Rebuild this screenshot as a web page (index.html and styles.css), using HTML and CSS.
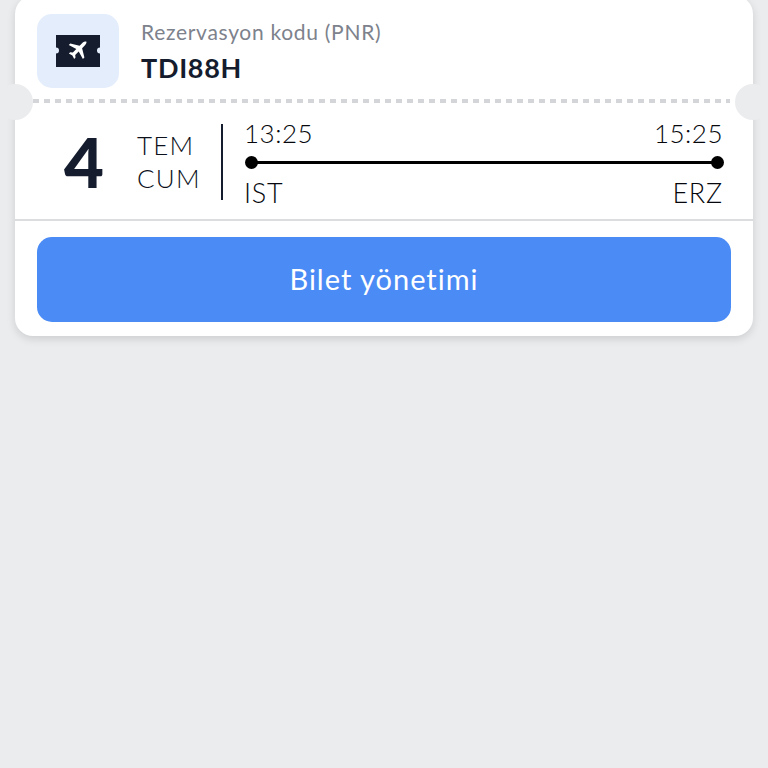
FILE: index.html
```html
<!DOCTYPE html>
<html lang="tr">
<head>
<meta charset="utf-8">
<title>Bilet</title>
<link rel="stylesheet" href="styles.css">
</head>
<body>
<main class="card">
  <section class="head">
    <div class="icon-box">
      <svg class="ticket" width="46" height="34" viewBox="0 0 46 34">
        <path fill="#141c2e" d="M1 1H45V13.500a3 3 0 0 0 0 6V33H1V19.500a3 3 0 0 0 0-6Z"/>
        <path fill="#fff" d="M31.500 7.800c-1-.8-2.600-.3-3.700.8l-3.200 3.100-9.300-2.300-1.500 1.500 7.500 4.200-3.400 3.500-2.700-.3-1.300 1.300 3.500 1.800 1.800 3.500 1.300-1.300-.3-2.700 3.500-3.400 4.200 7.500 1.500-1.500-2.300-9.300 3.100-3.200c1.100-1.100 1.300-2.300 1.300-3.200Z"/>
      </svg>
    </div>
    <div class="pnr">
      <div class="pnr-label">Rezervasyon kodu (PNR)</div>
      <div class="pnr-code">TDI88H</div>
    </div>
  </section>
  <div class="perforation"></div>
  <span class="notch notch-left"></span>
  <span class="notch notch-right"></span>
  <section class="flight">
    <div class="day">4</div>
    <div class="month"><span>TEM</span><span>CUM</span></div>
    <div class="route">
      <div class="route-row route-times"><span>13:25</span><span>15:25</span></div>
      <div class="route-line"></div>
      <div class="route-row route-codes"><span>IST</span><span>ERZ</span></div>
    </div>
  </section>
  <section class="action">
    <div class="button">Bilet yönetimi</div>
  </section>
</main>
</body>
</html>
```
FILE: styles.css
```css
* { box-sizing: border-box; }
html, body { height: 100%; }
body {
  margin: 0;
  background: #ebecee;
  font-family: "Lato", "Noto Sans", sans-serif;
  color: #141c2e;
  overflow: hidden;
}
.card {
  position: relative;
  margin: -4px 15px 0;
  height: 340px;
  background: #fff;
  border-radius: 18px;
  box-shadow: 0 3px 8px rgba(0, 0, 0, 0.13);
}
.head {
  display: flex;
  align-items: flex-start;
  gap: 22px;
  padding: 18px 22px 0;
  height: 103px;
}
.icon-box {
  width: 82px;
  height: 74px;
  border-radius: 15px;
  background: #e3edfb;
  display: flex;
  align-items: center;
  justify-content: center;
}
.ticket { display: block; }
.pnr { padding-top: 5px; }
.pnr-label {
  font-size: 21px;
  line-height: 25px;
  letter-spacing: 0.7px;
  color: #7d828c;
}
.pnr-code {
  margin-top: 9px;
  font-size: 27px;
  line-height: 30px;
  font-weight: 700;
  letter-spacing: 0.7px;
}
.perforation {
  margin: 0 23px 0 18px;
  height: 4px;
  background: repeating-linear-gradient(90deg, #d4d5d8 0 6px, transparent 6px 11px);
}
.notch {
  position: absolute;
  top: 88px;
  width: 36px;
  height: 36px;
  border-radius: 50%;
  background: #ebecee;
}
.notch-left { left: -18px; }
.notch-right { right: -18px; }
.flight {
  display: flex;
  height: 118px;
  border-bottom: 2px solid #dcdddf;
  padding-top: 21px;
}
.day {
  width: 122px;
  padding-left: 49px;
  font-size: 69px;
  line-height: 76px;
  font-weight: 900;
}
.month {
  width: 86px;
  height: 76px;
  border-right: 2px solid #141c2e;
  display: flex;
  flex-direction: column;
  font-size: 26px;
  font-weight: 300;
  letter-spacing: 1.2px;
  line-height: 33px;
  padding-top: 5px;
  color: #0c111c;
}
.route {
  flex: 1;
  margin-left: 21px;
  margin-right: 30px;
}
.route-row {
  display: flex;
  justify-content: space-between;
  font-size: 26px;
  font-weight: 300;
  letter-spacing: 0.5px;
  line-height: 30px;
  color: #05070c;
}
.route-times { margin-top: -6px; }
.route-codes {
  margin-top: 14px;
  font-size: 27px;
  letter-spacing: 0.8px;
}
.route-line {
  position: relative;
  height: 3px;
  margin: 13px 5px 0 7px;
  background: #000;
}
.route-line::before,
.route-line::after {
  content: "";
  position: absolute;
  top: -5px;
  width: 13px;
  height: 13px;
  border-radius: 50%;
  background: #000;
}
.route-line::before { left: -6px; }
.route-line::after { right: -6px; }
.action { padding: 16px 22px 0; }
.button {
  height: 85px;
  border-radius: 15px;
  background: #4a8bf5;
  color: #fff;
  font-size: 29px;
  letter-spacing: 1px;
  padding-bottom: 3px;
  display: flex;
  align-items: center;
  justify-content: center;
}
```
